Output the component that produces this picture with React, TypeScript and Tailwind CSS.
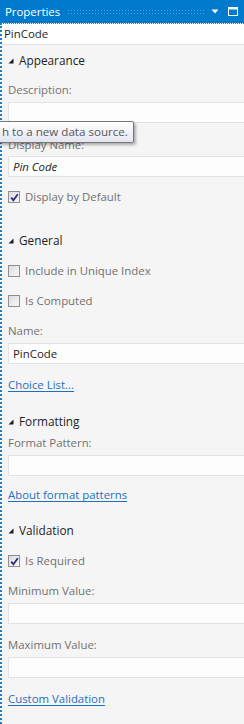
import React from 'react';

const font = { fontFamily: '"Open Sans", "Noto Sans", sans-serif' };

const Caret = () => (
  <svg width="6" height="6" viewBox="0 0 6 6" className="mr-[5px] shrink-0">
    <polygon points="5.5,0.5 5.5,5.5 0.5,5.5" fill="#1e1e1e" />
  </svg>
);

const Section: React.FC<{ title: string; mt: string }> = ({ title, mt }) => (
  <div className={`h-[20px] flex items-center pl-[6px] text-[11.8px] text-[#1e1e1e] ${mt}`}>
    <Caret />
    <span>{title}</span>
  </div>
);

const Label: React.FC<{ text: string; mt: string }> = ({ text, mt }) => (
  <div className={`h-[20px] flex items-center pl-[6px] text-[11.4px] text-[#717171] ${mt}`}>{text}</div>
);

const Field: React.FC<{ value?: string; italic?: boolean; mt: string }> = ({ value, italic, mt }) => (
  <div
    className={`h-[21px] ml-[6px] -mr-[4px] border border-[#e2e2e2] bg-[#fdfdfd] flex items-center pl-[4px] text-[11.4px] text-[#1e1e1e] ${mt} ${
      italic ? 'italic' : ''
    }`}
  >
    {value}
  </div>
);

const Check: React.FC<{ label: string; checked?: boolean; mt: string }> = ({ label, checked, mt }) => (
  <div className={`h-[20px] flex items-center pl-[6px] text-[11.4px] text-[#717171] ${mt}`}>
    <div className="w-[12px] h-[12px] border border-[#8e8f8f] bg-gradient-to-br from-[#dcdcdc] to-[#f8f8f8] flex items-center justify-center mr-[5px] shrink-0">
      {checked && (
        <svg width="9" height="9" viewBox="0 0 9 9">
          <path d="M1.2 4.6 L3.4 7.2 L7.8 1.2" stroke="#2b2f78" strokeWidth="1.8" fill="none" />
        </svg>
      )}
    </div>
    <span>{label}</span>
  </div>
);

const Link: React.FC<{ text: string; mt: string }> = ({ text, mt }) => (
  <div className={`h-[20px] flex items-center pl-[6px] text-[11.4px] ${mt}`}>
    <span className="text-[#1e6fc0] underline underline-offset-2">{text}</span>
  </div>
);

export default function App() {
  return (
    <div className="w-[244px] h-[724px] bg-[#f5f5f5] relative overflow-hidden" style={font}>
      {/* title bar */}
      <div className="h-[23px] bg-[#007acc] flex items-center pl-[5px] pr-[6px]">
        <span className="text-white text-[11.4px] leading-none">Properties</span>
        <div className="flex-1 h-[6px] ml-[7px] mr-[7px] bg-[radial-gradient(circle,#4aa3e0_0.6px,transparent_0.9px)] bg-[length:3px_3px]" />
        <svg width="8" height="5" viewBox="0 0 8 5" className="mr-[9px]">
          <polygon points="0.5,0.5 7.5,0.5 4,4.5" fill="#ffffff" />
        </svg>
        <svg width="10" height="9" viewBox="0 0 10 9">
          <rect x="0.5" y="0.5" width="9" height="8" fill="none" stroke="#ffffff" />
          <rect x="0.5" y="0.5" width="9" height="2" fill="#ffffff" />
        </svg>
      </div>

      {/* body */}
      <div className="border-t border-l-2 border-dotted border-[#1a7fd1] h-[701px]">
        <div className="h-[21px] bg-white border-b border-[#dedede] flex items-center pl-[2px] text-[11.4px] text-[#1e1e1e]">
          PinCode
        </div>

        <Section title="Appearance" mt="mt-[6px]" />
        <Label text="Description:" mt="mt-[9px]" />
        <Field mt="mt-[2px]" />
        <Label text="Display Name:" mt="mt-[12px]" />
        <Field value="Pin Code" italic mt="mt-[1px]" />
        <Check label="Display by Default" checked mt="mt-[10px]" />

        <Section title="General" mt="mt-[24px]" />
        <Check label="Include in Unique Index" mt="mt-[10px]" />
        <Check label="Is Computed" mt="mt-[10px]" />
        <Label text="Name:" mt="mt-[10px]" />
        <Field value="PinCode" mt="mt-[2px]" />
        <Link text="Choice List..." mt="mt-[11px]" />

        <Section title="Formatting" mt="mt-[17px]" />
        <Label text="Format Pattern:" mt="mt-[1px]" />
        <Field mt="mt-[2px]" />
        <Link text="About format patterns" mt="mt-[9px]" />

        <Section title="Validation" mt="mt-[16px]" />
        <Check label="Is Required" checked mt="mt-[10px]" />
        <Label text="Minimum Value:" mt="mt-[10px]" />
        <Field mt="mt-[2px]" />
        <Label text="Maximum Value:" mt="mt-[11px]" />
        <Field mt="mt-[2px]" />
        <Link text="Custom Validation" mt="mt-[11px]" />
      </div>

      {/* tooltip */}
      <div className="absolute left-[-8px] top-[121px] h-[22px] pl-[9px] pr-[5px] whitespace-nowrap border border-[#767676] rounded-[2px] bg-gradient-to-b from-white to-[#e4e5f0] shadow-[2px_2px_3px_rgba(0,0,0,0.3)] flex items-center text-[11.6px] text-[#575757]">
        h to a new data source.
      </div>
    </div>
  );
}
